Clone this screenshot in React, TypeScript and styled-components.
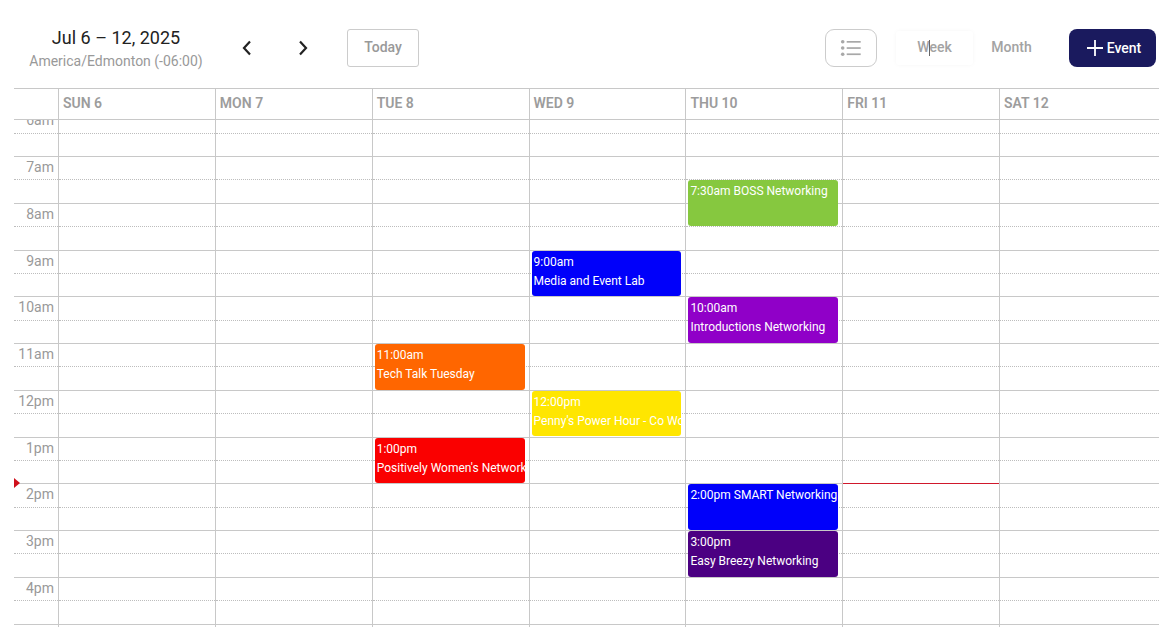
import React from "react";
import styled, { createGlobalStyle } from "styled-components";

const HOUR = 46.75;
const START = 6;
const NOW = 13.98;
const LINE = "#c8c8c8";
const DOTTED = "#bdbdbd";

const Global = createGlobalStyle`
  html, body { margin: 0; padding: 0; background: #fff; }
  body { font-family: Roboto, "Liberation Sans", sans-serif; }
  * { box-sizing: border-box; }
`;

const Page = styled.div`
  height: 627px;
  width: 1159px;
  overflow: hidden;
  padding-left: 14px;
  display: flex;
  flex-direction: column;
`;

const Toolbar = styled.header`
  height: 88px;
  flex: none;
  display: flex;
  align-items: flex-start;
  padding-top: 29px;
`;

const TitleBlock = styled.div`
  width: 204px;
  margin-top: -2px;
  text-align: center;
`;

const Title = styled.div`
  font-size: 18px;
  line-height: 22px;
  color: #222;
`;

const Zone = styled.div`
  font-size: 14px;
  line-height: 20px;
  margin-top: 2px;
  color: #999;
`;

const Nav = styled.div`
  width: 129px;
  height: 38px;
  display: flex;
  align-items: center;
  gap: 46px;
  padding-left: 24px;
  color: #222;
`;

const Today = styled.button`
  width: 72px;
  height: 38px;
  padding: 0 0 2px;
  background: #fff;
  border: 1px solid #ccc;
  border-radius: 3px;
  color: #999;
  font: 500 14px Roboto, sans-serif;
`;

const Right = styled.div`
  margin-left: auto;
  margin-right: 3px;
  display: flex;
  align-items: flex-start;
`;

const ListButton = styled.button`
  width: 52px;
  height: 38px;
  padding: 0;
  display: flex;
  align-items: center;
  justify-content: center;
  background: #fff;
  border: 1px solid #ccc;
  border-radius: 9px;
`;

const Tabs = styled.div`
  display: flex;
  margin: 0 19px;
`;

const Tab = styled.div<{ $active?: boolean }>`
  position: relative;
  width: 77px;
  height: 34px;
  margin-top: 2px;
  display: flex;
  align-items: center;
  justify-content: center;
  padding-bottom: 2px;
  border-radius: 3px;
  font-weight: 500;
  font-size: 14px;
  color: #a3a3a3;
  box-shadow: ${(p) => (p.$active ? "0 0 4px rgba(0,0,0,0.04)" : "none")};
`;

const Caret = styled.span`
  position: absolute;
  left: 33px;
  top: 9px;
  width: 1px;
  height: 16px;
  background: #666;
`;

const AddButton = styled.button`
  width: 87px;
  height: 38px;
  padding: 0 0 1px 3px;
  display: flex;
  align-items: center;
  justify-content: center;
  gap: 4px;
  border: 0;
  border-radius: 8px;
  background: #1a1a5e;
  color: #fff;
  font: 500 14px Roboto, sans-serif;
`;

const COLUMNS = "44px repeat(6, 156.85px) 1fr";

const HeaderRow = styled.div`
  flex: none;
  height: 32px;
  display: grid;
  grid-template-columns: ${COLUMNS};
  border-top: 1px solid ${LINE};
  border-bottom: 1px solid ${LINE};
`;

const HeaderCell = styled.div`
  border-left: 1px solid ${LINE};
  padding-left: 4px;
  font-size: 14px;
  font-weight: 600;
  line-height: 29px;
  color: #9c9c9c;
`;

const Scroller = styled.div`
  flex: 1;
  min-height: 0;
  overflow: hidden;
`;

const Grid = styled.div`
  margin-top: -9.75px;
  display: grid;
  grid-template-columns: ${COLUMNS};
`;

const Gutter = styled.div`
  position: relative;
`;

const Day = styled.div`
  position: relative;
  border-left: 1px solid ${LINE};
`;

const Half = styled.div<{ $hour?: boolean }>`
  height: ${HOUR / 2}px;
  border-bottom: 1px ${(p) => (p.$hour ? "solid" : "dotted")} ${(p) => (p.$hour ? LINE : DOTTED)};
`;

const HourLabel = styled.div`
  height: ${HOUR / 2}px;
  border-bottom: 1px dotted ${DOTTED};
  padding-right: 4px;
  text-align: right;
  font-size: 14px;
  line-height: 20px;
  color: #999;
`;

const Event = styled.div<{ $color: string; $start: number }>`
  position: absolute;
  left: 2px;
  right: 4px;
  top: ${(p) => (p.$start - START) * HOUR + 0.05}px;
  height: 45.7px;
  padding: 2px 2px 0;
  overflow: hidden;
  white-space: nowrap;
  border-radius: 3px;
  background: ${(p) => p.$color};
  color: #fff;
  font-size: 12px;
  line-height: 19px;
`;

const NowMarker = styled.div`
  position: absolute;
  left: 0;
  top: ${(NOW - START) * HOUR}px;
  width: 0;
  height: 0;
  border-left: 6px solid #d0101c;
  border-top: 5px solid transparent;
  border-bottom: 5px solid transparent;
  margin-top: -5px;
`;

const NowLine = styled.div`
  position: absolute;
  left: 0;
  right: 0;
  top: ${(NOW - START) * HOUR}px;
  height: 1px;
  background: #d0182c;
`;

type Ev = { day: number; start: number; lines: string[]; color: string };

const EVENTS: Ev[] = [
  { day: 4, start: 7.5, lines: ["7:30am BOSS Networking"], color: "#86c83f" },
  { day: 3, start: 9, lines: ["9:00am", "Media and Event Lab"], color: "#0000fa" },
  { day: 4, start: 10, lines: ["10:00am", "Introductions Networking"], color: "#9000c8" },
  { day: 2, start: 11, lines: ["11:00am", "Tech Talk Tuesday"], color: "#ff6600" },
  { day: 3, start: 12, lines: ["12:00pm", "Penny's Power Hour - Co Working"], color: "#ffe600" },
  { day: 2, start: 13, lines: ["1:00pm", "Positively Women's Networking"], color: "#fa0000" },
  { day: 4, start: 14, lines: ["2:00pm SMART Networking"], color: "#0000fa" },
  { day: 4, start: 15, lines: ["3:00pm", "Easy Breezy Networking"], color: "#4b0082" },
];

const DAYS = ["SUN 6", "MON 7", "TUE 8", "WED 9", "THU 10", "FRI 11", "SAT 12"];
const HOURS = ["6am", "7am", "8am", "9am", "10am", "11am", "12pm", "1pm", "2pm", "3pm", "4pm", "5pm"];

const Chevron = ({ dir }: { dir: "left" | "right" }) => (
  <svg width="10" height="16" viewBox="0 0 10 16" fill="none" stroke="currentColor" strokeWidth="2.2">
    <path d={dir === "left" ? "M8 1.5 L2 8 L8 14.5" : "M2 1.5 L8 8 L2 14.5"} />
  </svg>
);

const ListIcon = () => (
  <svg width="22" height="16" viewBox="0 0 22 16" fill="#a8a8a8">
    <circle cx="2.7" cy="1.8" r="1.8" />
    <circle cx="2.7" cy="8" r="1.8" />
    <circle cx="2.7" cy="14.2" r="1.8" />
    <rect x="6.7" y="1" width="14" height="1.7" />
    <rect x="6.7" y="7.2" width="14" height="1.7" />
    <rect x="6.7" y="13.4" width="14" height="1.7" />
  </svg>
);

const PlusIcon = () => (
  <svg width="16" height="16" viewBox="0 0 16 16" stroke="#fff" strokeWidth="1.8">
    <path d="M8 0 V16 M0 8 H16" />
  </svg>
);

export default function App() {
  return (
    <>
      <Global />
      <Page>
        <Toolbar>
          <TitleBlock>
            <Title>Jul 6 – 12, 2025</Title>
            <Zone>America/Edmonton (-06:00)</Zone>
          </TitleBlock>
          <Nav>
            <Chevron dir="left" />
            <Chevron dir="right" />
          </Nav>
          <Today>Today</Today>
          <Right>
            <ListButton>
              <ListIcon />
            </ListButton>
            <Tabs>
              <Tab $active>
                Week
                <Caret />
              </Tab>
              <Tab>Month</Tab>
            </Tabs>
            <AddButton>
              <PlusIcon />
              Event
            </AddButton>
          </Right>
        </Toolbar>
        <HeaderRow>
          <div />
          {DAYS.map((d) => (
            <HeaderCell key={d}>{d}</HeaderCell>
          ))}
        </HeaderRow>
        <Scroller>
          <Grid>
            <Gutter>
              <NowMarker />
              {HOURS.map((h) => (
                <React.Fragment key={h}>
                  <HourLabel>{h}</HourLabel>
                  <Half $hour />
                </React.Fragment>
              ))}
            </Gutter>
            {DAYS.map((d, i) => (
              <Day key={d}>
                {HOURS.map((h) => (
                  <React.Fragment key={h}>
                    <Half />
                    <Half $hour />
                  </React.Fragment>
                ))}
                {i === 5 && <NowLine />}
                {EVENTS.filter((e) => e.day === i).map((e) => (
                  <Event key={e.start} $color={e.color} $start={e.start}>
                    {e.lines.map((l) => (
                      <div key={l}>{l}</div>
                    ))}
                  </Event>
                ))}
              </Day>
            ))}
          </Grid>
        </Scroller>
      </Page>
    </>
  );
}
